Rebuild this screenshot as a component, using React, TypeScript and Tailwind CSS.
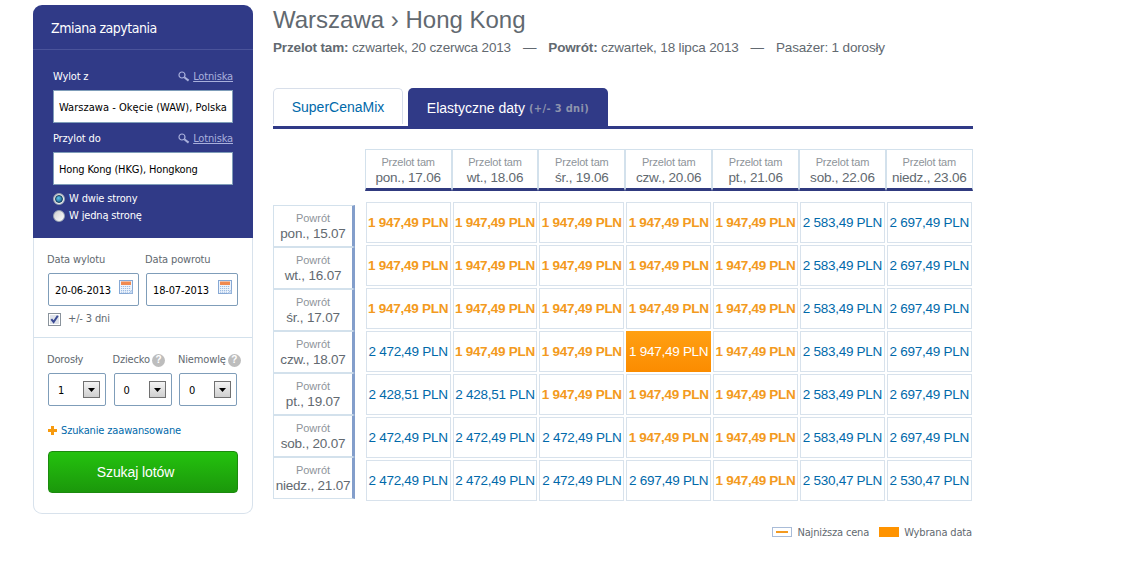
import { useState } from 'react';
import type { ReactNode } from 'react';

const LOWEST = '1 947,49';

const departures = ['pon., 17.06', 'wt., 18.06', 'śr., 19.06', 'czw., 20.06', 'pt., 21.06', 'sob., 22.06', 'niedz., 23.06'];
const returns = ['pon., 15.07', 'wt., 16.07', 'śr., 17.07', 'czw., 18.07', 'pt., 19.07', 'sob., 20.07', 'niedz., 21.07'];

const prices = [
  [LOWEST, LOWEST, LOWEST, LOWEST, LOWEST, '2 583,49', '2 697,49'],
  [LOWEST, LOWEST, LOWEST, LOWEST, LOWEST, '2 583,49', '2 697,49'],
  [LOWEST, LOWEST, LOWEST, LOWEST, LOWEST, '2 583,49', '2 697,49'],
  ['2 472,49', LOWEST, LOWEST, LOWEST, LOWEST, '2 583,49', '2 697,49'],
  ['2 428,51', '2 428,51', LOWEST, LOWEST, LOWEST, '2 583,49', '2 697,49'],
  ['2 472,49', '2 472,49', '2 472,49', LOWEST, LOWEST, '2 583,49', '2 697,49'],
  ['2 472,49', '2 472,49', '2 472,49', '2 697,49', LOWEST, '2 530,47', '2 530,47'],
];

function SearchIcon() {
  return (
    <svg width="12" height="12" viewBox="0 0 12 12" fill="none" stroke="#a9b0dc">
      <circle cx="4" cy="4" r="3" strokeWidth="1.2" />
      <path d="M6.3 6.2 10.6 9.6" strokeWidth="2" />
    </svg>
  );
}

function CalendarIcon() {
  return (
    <svg width="14" height="14" viewBox="0 0 14 14">
      <rect x="0.5" y="0.5" width="13" height="13" fill="#eef4fc" stroke="#86a8d4" />
      <rect x="2" y="1.5" width="10" height="3.5" fill="#f08a50" />
      <path d="M2 6.5h10M2 8.5h10M2 10.5h10M2 12.2h7" stroke="#9dbce2" strokeDasharray="1.2 0.8" />
      <path d="M13.5 9.5v4h-4z" fill="#c9dcf3" stroke="#86a8d4" strokeWidth="0.5" />
    </svg>
  );
}

function HelpIcon() {
  return (
    <span className="flex size-[13px] shrink-0 items-center justify-center rounded-full bg-[#bdbdbd] font-['Liberation_Sans',sans-serif] text-[10px] leading-none font-bold text-white">
      ?
    </span>
  );
}

/**
 * Airport field with its label and lookup link
 */
function AirportField({ label, children }: { label: string; children: ReactNode }) {
  return (
    <div className="h-[62px]">
      <div className="flex h-4 items-center justify-between">
        <span className="text-white">{label}</span>
        <a className="flex items-center gap-[3px] text-[#a9b0dc]">
          <SearchIcon />
          <span className="underline">Lotniska</span>
        </a>
      </div>
      <div className="mt-[5px] flex h-[33px] items-center border border-[#7f9db9] bg-white pt-[3px] pl-[5px] whitespace-nowrap text-black">
        {children}
      </div>
    </div>
  );
}

function Radio({ checked, onSelect, children }: { checked: boolean; onSelect: () => void; children: ReactNode }) {
  return (
    <button className="flex h-[17px] items-center gap-1 text-white" onClick={onSelect}>
      <span className="-mt-[2px] flex size-[12px] items-center justify-center rounded-full border border-[#9aa5b4] bg-linear-to-br from-[#cfcfcf] to-white">
        {checked && <span className="size-[8px] rounded-full border border-[#123f60] bg-radial-[at_40%_35%] from-[#5cc5ee] to-[#0f4c75]" />}
      </span>
      {children}
    </button>
  );
}

function DateField({ label, value }: { label: string; value: string }) {
  return (
    <div>
      <div className="-ml-px h-4 leading-4">{label}</div>
      <div className="mt-[5px] flex h-[33px] items-center justify-between rounded-[2px] border border-[#7f9db9] pr-[5px] pl-[6px] text-black">
        <span className="pt-[3px]">{value}</span>
        <span className="-mt-[5px]">
          <CalendarIcon />
        </span>
      </div>
    </div>
  );
}

function PassengerSelect({ label, value, help }: { label: string; value: number; help?: boolean }) {
  return (
    <div className="w-[58px]">
      <div className="-ml-px flex h-4 items-center gap-[2px] whitespace-nowrap">
        {label}
        {help && <HelpIcon />}
      </div>
      <div className="mt-[5px] flex h-[33px] items-center justify-between rounded-[2px] border border-[#7f9db9] pr-[5px] pl-[9px] text-black">
        <span className="pt-[3px]">{value}</span>
        <span className="flex size-[17px] items-center justify-center border border-[#707070] bg-linear-to-b from-[#f4f4f4] to-[#cfcfcf]">
          <svg width="7" height="4" viewBox="0 0 7 4">
            <path d="M0 0h7L3.5 4z" fill="#000" />
          </svg>
        </span>
      </div>
    </div>
  );
}

/**
 * Left column with the query form
 */
function SearchPanel() {
  const [roundTrip, setRoundTrip] = useState(true);

  return (
    <aside className="mt-[5px] h-[509px] w-[220px] shrink-0 rounded-[9px] border border-t-0 border-[#d8e2ec] font-['DejaVu_Sans_Condensed','DejaVu_Sans',sans-serif] text-[11px] tracking-[-0.15px] text-[#626970]">
      <div className="-mx-px h-[233px] rounded-t-[9px] bg-[#303a87]">
        <h2 className="flex h-[45px] items-center border-b border-[#4a539a] pt-[2px] pl-[18px] text-[14px] tracking-[-0.48px] text-white">
          Zmiana zapytania
        </h2>
        <div className="pt-[19px] pr-5 pl-5">
          <AirportField label="Wylot z">
            <span className="tracking-[0.03px]">Warszawa - Okęcie (WAW), Polska</span>
          </AirportField>
          <AirportField label="Przylot do">Hong Kong (HKG), Hongkong</AirportField>
          <div className="-mt-[2px]">
            <Radio checked={roundTrip} onSelect={() => setRoundTrip(true)}>W dwie strony</Radio>
            <Radio checked={!roundTrip} onSelect={() => setRoundTrip(false)}>W jedną stronę</Radio>
          </div>
        </div>
      </div>

      <div className="h-[100px] border-b border-[#d3e1ec] pt-[14px] pl-[14px]">
        <div className="grid grid-cols-[91px_92px] gap-[7px]">
          <DateField label="Data wylotu" value="20-06-2013" />
          <DateField label="Data powrotu" value="18-07-2013" />
        </div>
        <div className="mt-[5px] flex h-4 items-center gap-[7px]">
          <svg width="13" height="13" viewBox="0 0 13 13">
            <rect x="0.5" y="0.5" width="12" height="12" fill="#fff" stroke="#8a939c" />
            <rect x="2" y="2" width="9" height="9" fill="#dfe3ea" />
            <path d="M3.3 6.2 5.6 9 9.8 2.8" fill="none" stroke="#3a4a94" strokeWidth="2" />
          </svg>
          <span className="pt-px">+/- 3 dni</span>
        </div>
      </div>

      <div className="pt-[14px] pl-[14px]">
        <div className="flex gap-[7.5px]">
          <PassengerSelect label="Dorosły" value={1} />
          <PassengerSelect label="Dziecko" value={0} help />
          <PassengerSelect label="Niemowlę" value={0} help />
        </div>
        <a className="mt-[17px] flex h-4 items-center gap-1 text-[#0069aa]">
          <svg className="-mt-px" width="9" height="9" viewBox="0 0 9 9">
            <path d="M4.5 0v9M0 4.5h9" stroke="#f79a0e" strokeWidth="3" />
          </svg>
          Szukanie zaawansowane
        </a>
        <button className="mt-3 h-[42px] w-[190px] rounded-[4px] border border-[#1c8a0e] bg-linear-to-b from-[#24c20e] to-[#1b980b] pr-[15px] font-['Liberation_Sans',Arial,sans-serif] text-[14px] tracking-[-0.1px] text-white">
          Szukaj lotów
        </button>
      </div>
    </aside>
  );
}

function PriceCell({ price, selected }: { price: string; selected: boolean }) {
  if (selected) {
    return (
      <div className="flex items-center justify-center bg-linear-to-b from-[#ffa012] to-[#fb8c00] pt-px whitespace-nowrap text-white">
        {price} PLN
      </div>
    );
  }
  if (price === LOWEST) {
    return (
      <div className="flex items-center justify-center border border-[#d8e2ec] pt-px font-bold whitespace-nowrap text-[#f39a20]">
        {price} PLN
      </div>
    );
  }
  return (
    <div className="flex items-center justify-center border border-[#d8e2ec] pt-px whitespace-nowrap text-[#0069aa]">
      {price} PLN
    </div>
  );
}

/**
 * Prices for every departure / return pair
 */
function PriceMatrix() {
  return (
    <div className="mt-5 flex">
      <div className="mt-[56px] w-[82px] shrink-0">
        {returns.map((date) => (
          <div key={date} className="flex h-[42px] flex-col items-center border border-r-[3px] border-[#d3e1ec] border-r-[#839ecb] pt-[5px] text-[13.5px] leading-[15px] tracking-[-0.2px] whitespace-nowrap">
            <div className="text-[11px] tracking-normal text-[#8e949a]">Powrót</div>
            {date}
          </div>
        ))}
      </div>
      <div className="ml-[9.7px]">
        <div className="grid h-[42px] w-[608px] grid-cols-7">
          {departures.map((date) => (
            <div key={date} className="flex flex-col items-center border border-b-[3px] border-[#d3e1ec] border-b-[#303a7f] pt-[5px] text-[13.5px] leading-[15px] tracking-[-0.2px] whitespace-nowrap">
              <div className="text-[11px] text-[#8e949a]">Przelot tam</div>
              {date}
            </div>
          ))}
        </div>
        <div className="mt-[11px] ml-px grid w-[606px] auto-rows-[41px] grid-cols-7 gap-[2px] text-[13.5px] tracking-[-0.27px]">
          {prices.map((row, r) =>
            row.map((price, c) => <PriceCell key={`${r}-${c}`} price={price} selected={r === 3 && c === 3} />),
          )}
        </div>
      </div>
    </div>
  );
}

export default function App() {
  return (
    <div className="flex h-[568px] w-[1121px] overflow-hidden bg-white pl-[33px] font-['Liberation_Sans',Arial,sans-serif] text-[#626970]">
      <SearchPanel />
      <main className="ml-5 w-[700px]">
        <h1 className="pt-[5px] text-[24px] leading-[30px]">Warszawa › Hong Kong</h1>
        <div className="mt-[5px] flex text-[13.5px] leading-4 tracking-[-0.155px] whitespace-nowrap">
          <span>
            <b>Przelot tam:</b> czwartek, 20 czerwca 2013
          </span>
          <span className="mx-3">—</span>
          <span>
            <b>Powrót:</b> czwartek, 18 lipca 2013
          </span>
          <span className="mx-3">—</span>
          <span>Pasażer: 1 dorosły</span>
        </div>

        <nav className="mt-[32px] flex h-[41px] items-start gap-[5px] border-b-[3px] border-[#303a87] text-[14px]">
          <a className="flex h-[36px] w-[130px] items-center justify-center rounded-t-[5px] border border-b-0 border-[#d8dfea] pt-[2px] text-[#0069aa]">
            SuperCenaMix
          </a>
          <a className="flex h-[38px] w-[200px] items-center justify-center gap-1 rounded-t-[5px] bg-[#303a87] pt-[3px] text-white">
            Elastyczne daty
            <span className="pt-[2px] font-['DejaVu_Sans_Condensed','DejaVu_Sans',sans-serif] text-[11px] font-bold tracking-[0.35px] text-[#8d93ad]">(+/- 3 dni)</span>
          </a>
        </nav>

        <PriceMatrix />

        <div className="mt-[24px] flex h-4 items-center justify-end pr-px font-['DejaVu_Sans_Condensed','DejaVu_Sans',sans-serif] text-[11px] tracking-[-0.15px] whitespace-nowrap">
          <span className="-mt-[2px] mr-[5px] flex h-[10px] w-5 items-center justify-center border border-[#a9bcd8]">
            <span className="h-[2px] w-3 bg-[#f39a20]" />
          </span>
          Najniższa cena
          <span className="-mt-[2px] mr-[5px] ml-[10px] h-[10px] w-5 bg-[#ff9300]" />
          Wybrana data
        </div>
      </main>
    </div>
  );
}
